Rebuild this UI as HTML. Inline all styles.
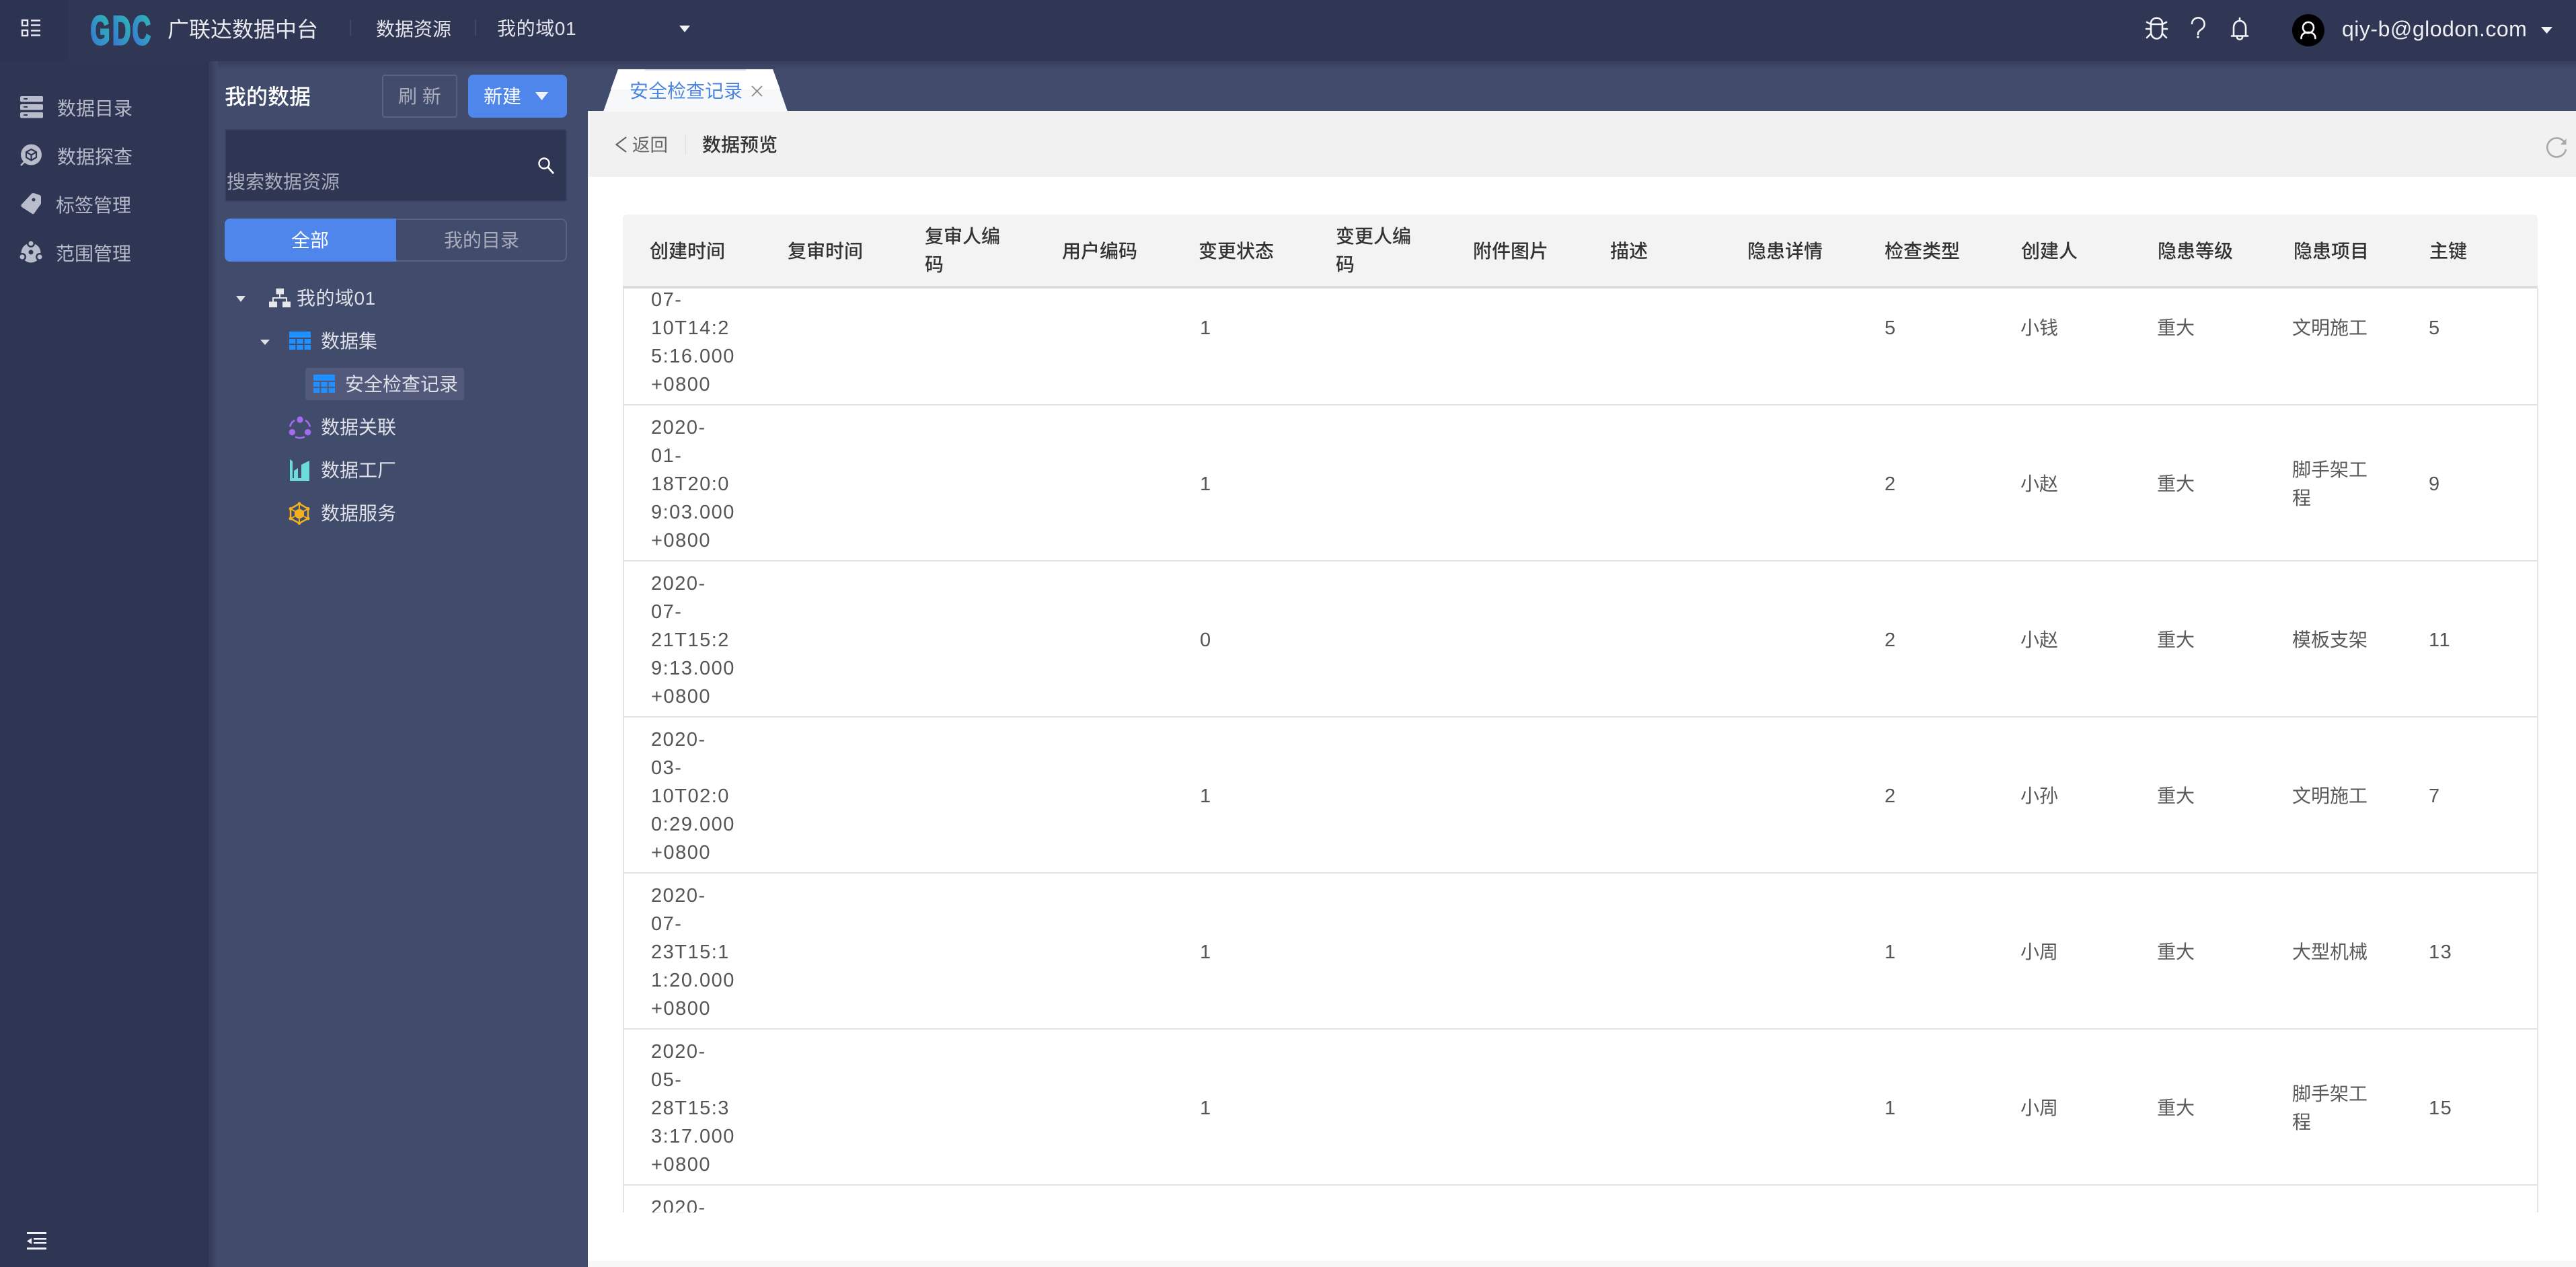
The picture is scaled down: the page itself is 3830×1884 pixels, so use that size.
<!DOCTYPE html>
<html lang="zh"><head><meta charset="utf-8"><title>广联达数据中台</title>
<style>
html,body{margin:0;padding:0;background:#fff}
body{width:3830px;height:1884px;position:relative;overflow:hidden;font-family:"Liberation Sans","Noto Sans CJK SC",sans-serif;font-size:28px;color:#555}
.a{position:absolute}
.t{position:absolute;white-space:nowrap;line-height:42px;margin-top:1px}
.h{font-weight:500;color:#333;font-size:28px}
.c{font-size:28px;color:#5a5a5a}
.n{font-size:29px;letter-spacing:1.5px;color:#555}
.l{color:#b5b9c8;font-size:28px}
.p{color:#dfe1e8;font-size:28px}
</style></head><body>
<div class="a" style="left:0;top:0;width:3830px;height:91px;background:#303755"></div>
<div class="a" style="left:0;top:0;width:102px;height:91px;background:#2d3451"></div>
<div class="a" style="left:0;top:91px;width:310px;height:1793px;background:#2f3654"></div>
<div class="a" style="left:310px;top:91px;width:3520px;height:74px;background:#414b6b"></div>
<div class="a" style="left:310px;top:91px;width:564px;height:1793px;background:#414b6b"></div>
<div class="a" style="left:310px;top:91px;width:3520px;height:14px;background:linear-gradient(#383f5e,#414b6b)"></div>
<div class="a" style="left:310px;top:91px;width:14px;height:1793px;background:linear-gradient(90deg,#333b5a,#414b6b)"></div>
<div class="a" style="left:874px;top:165px;width:2956px;height:98px;background:#f1f1f1"></div>
<div class="a" style="left:874px;top:263px;width:2956px;height:1621px;background:#fff"></div>
<div class="a" style="left:874px;top:1875px;width:2956px;height:9px;background:#f7f7f7"></div>

<div class="a" style="left:568px;top:111px;width:108px;height:60px;border:2px solid #5a627f;border-radius:4px"></div>
<div class="a" style="left:696px;top:111px;width:147px;height:64px;background:#4f86ec;border-radius:8px"></div>
<div class="a" style="left:334px;top:192px;width:505px;height:104px;background:#2f3654;border:2px solid #3a4263;border-radius:3px"></div>
<div class="a" style="left:589px;top:325px;width:252px;height:60px;border:2px solid #5a627f;border-left:none;border-radius:0 8px 8px 0"></div>
<div class="a" style="left:334px;top:325px;width:255px;height:64px;background:#4f86ec;border-radius:8px 0 0 8px"></div>
<div class="a" style="left:454px;top:547px;width:236px;height:48px;background:#52597a;border-radius:4px"></div>

<div class="t" style="left:249px;top:22px;font-size:32px;color:#e9eaee">广联达数据中台</div>
<div class="a" style="left:520px;top:29px;width:2px;height:24px;background:#434a68"></div>
<div class="t" style="left:559px;top:22px;color:#e3e4ea;font-size:28px">数据资源</div>
<div class="a" style="left:706px;top:29px;width:2px;height:24px;background:#434a68"></div>
<div class="t" style="left:739px;top:21px;color:#e3e4ea;font-size:28px;letter-spacing:.6px">我的域01</div>
<div class="t" style="left:3482px;top:21px;font-size:32px;letter-spacing:.5px;color:#eceef2">qiy-b@glodon.com</div>

<div class="t l" style="left:85px;top:140px">数据目录</div>
<div class="t l" style="left:85px;top:212px">数据探查</div>
<div class="t l" style="left:83px;top:284px">标签管理</div>
<div class="t l" style="left:83px;top:356px">范围管理</div>

<div class="t" style="left:334px;top:122px;font-size:32px;font-weight:500;color:#fff">我的数据</div>
<div class="t" style="left:592px;top:122px;font-size:28px;color:#a8acbb">刷 新</div>
<div class="t" style="left:719px;top:122px;font-size:28px;color:#fff">新建</div>
<div class="t" style="left:337px;top:249px;font-size:28px;color:#a9adbb">搜索数据资源</div>
<div class="t" style="left:433px;top:336px;font-size:28px;color:#fff">全部</div>
<div class="t" style="left:660px;top:336px;font-size:28px;color:#a8acbb">我的目录</div>

<div class="t p" style="left:441px;top:422px;letter-spacing:.5px">我的域01</div>
<div class="t p" style="left:477px;top:486px">数据集</div>
<div class="t p" style="left:513px;top:550px">安全检查记录</div>
<div class="t p" style="left:477px;top:614px">数据关联</div>
<div class="t p" style="left:477px;top:678px">数据工厂</div>
<div class="t p" style="left:477px;top:742px">数据服务</div>

<svg class="a" style="left:0;top:0" width="3830" height="1884" viewBox="0 0 3830 1884" fill="none">
<defs>
<linearGradient id="lg" x1="0" y1="1" x2="1" y2="0"><stop offset="0" stop-color="#3b6fd8"/><stop offset="1" stop-color="#2bbfb0"/></linearGradient>
</defs>
<path d="M919 103H1149L1171 166H897Z" fill="#f7f8f9"/>
<path d="M908 133L919 103H1149L1160 133Z" fill="#fff"/>
<rect x="959" y="103" width="150" height="2" fill="#dfe2e8"/>
<g stroke="#e8e9ef" stroke-width="2.4">
<rect x="33" y="30" width="8" height="8"/><rect x="33" y="45" width="8" height="8"/>
<path d="M46 30.5H60M46 37.5H60M46 45.5H60M46 52.5H60"/>
</g>
<g font-family="Liberation Sans" font-weight="700" font-size="60" fill="url(#lg)" stroke="url(#lg)" stroke-width="3">
<text x="134.500" y="66" textLength="29" lengthAdjust="spacingAndGlyphs">G</text>
<text x="167" y="66" textLength="27.500" lengthAdjust="spacingAndGlyphs">D</text>
<text x="196.500" y="66" textLength="27.500" lengthAdjust="spacingAndGlyphs">C</text>
</g>
<g fill="#f2f3f6">
<path d="M1010 38H1026L1018 48Z"/><path d="M3778 40H3795L3786.5 50Z"/><path d="M796 137H815L805.5 149Z"/>
<path d="M351 440H365L358 449Z" fill="#dfe1e8"/><path d="M387 505H401L394 513Z" fill="#dfe1e8"/>
</g>
<g stroke="#f4f5f8" stroke-width="2.600" stroke-linecap="round">
<path d="M3198 35C3198 24 3215 24 3215 35"/>
<path d="M3192 33L3198 36H3215L3221 33"/>
<path d="M3198 36V47C3198 61 3215 61 3215 47V36"/>
<path d="M3191 43H3198M3215 43H3222M3198 50L3192 56M3215 50L3221 56"/>
<path d="M3259 35A9.300 9.300 0 1 1 3274 43C3270 46 3268 47 3268 51"/>
<path d="M3321 53V41C3321 35 3325 31 3330 31C3335 31 3339 35 3339 41V53"/>
<path d="M3318 53.5H3342M3330 27V31M3326 55C3326 60 3334 60 3334 55"/>
</g>
<circle cx="3268" cy="55" r="1.800" fill="#f4f5f8"/>
<circle cx="3432" cy="45" r="24" fill="#000"/>
<circle cx="3432" cy="41" r="8" stroke="#fff" stroke-width="2.600"/>
<path d="M3421.5 57C3421.5 51 3426 48 3432 48C3438 48 3442.5 51 3442.5 57" stroke="#fff" stroke-width="2.600" stroke-linecap="round"/>
<g fill="#b9bdcb">
<rect x="30" y="143" width="34" height="8.500" rx="2"/><rect x="30" y="155" width="34" height="8.500" rx="2"/><rect x="30" y="167" width="34" height="8.500" rx="2"/>
<circle cx="46.5" cy="230" r="15.500"/>
<path d="M31 246L37 240" stroke="#b9bdcb" stroke-width="2.500"/>
<path d="M50 287L59 290Q61 291 61 293L61 303L51 317Q50 319 48 318L32.5 308Q30.5 306 32 304L47 288Q48 287 50 287Z"/>
<circle cx="46" cy="376" r="14.500"/>
</g>
<g fill="#2f3654">
<rect x="35" y="146" width="6" height="2"/><rect x="35" y="158" width="6" height="2"/><rect x="35" y="170" width="6" height="2"/>
<circle cx="50" cy="297" r="2.500"/>
<circle cx="46" cy="362" r="6"/><circle cx="33" cy="382" r="6"/><circle cx="59" cy="382" r="6"/><circle cx="46" cy="375" r="3.500"/>
</g>
<g fill="#b9bdcb"><circle cx="46" cy="362" r="3.500"/><circle cx="33" cy="382" r="3.500"/><circle cx="59" cy="382" r="3.500"/></g>
<path d="M46.5 222L54 226V234L46.5 238.5L39 234V226ZM39 226L46.5 230.5L54 226M46.5 230.5V238.5" stroke="#2f3654" stroke-width="2.200" stroke-linejoin="round"/>
<g fill="#f2f3f6">
<rect x="40" y="1832" width="29" height="3"/><rect x="50" y="1841" width="19" height="2.500"/><rect x="50" y="1847" width="19" height="2.500"/><rect x="40" y="1855" width="29" height="3"/>
<path d="M47 1841V1850L40 1845.5Z"/>
</g>
<circle cx="809" cy="243" r="7.500" stroke="#fff" stroke-width="2.400"/>
<path d="M815 249L823 258" stroke="#fff" stroke-width="2.800"/>
<g fill="#e6e7ec"><rect x="410.5" y="429" width="11.500" height="8.500"/><rect x="400" y="448.5" width="12" height="8.500"/><rect x="420" y="448.5" width="12" height="8.500"/></g>
<path d="M416 437V443M406 449V443H426V449" stroke="#e6e7ec" stroke-width="2"/>
<g fill="#1e90ff">
<rect x="430" y="493" width="32" height="9"/><rect x="430" y="504" width="9.300" height="7"/><rect x="441.3" y="504" width="9.300" height="7"/><rect x="452.7" y="504" width="9.300" height="7"/><rect x="430" y="513" width="9.300" height="7"/><rect x="441.3" y="513" width="9.300" height="7"/><rect x="452.7" y="513" width="9.300" height="7"/>
<rect x="466" y="557" width="32" height="9"/><rect x="466" y="568" width="9.300" height="7"/><rect x="477.3" y="568" width="9.300" height="7"/><rect x="488.7" y="568" width="9.300" height="7"/><rect x="466" y="577" width="9.300" height="7"/><rect x="477.3" y="577" width="9.300" height="7"/><rect x="488.7" y="577" width="9.300" height="7"/>
</g>
<g fill="#a26bf0"><circle cx="446" cy="624" r="4.700"/><circle cx="434.3" cy="642.7" r="4.700"/><circle cx="457.7" cy="642.7" r="4.700"/></g>
<path d="M438 625A15.500 15.500 0 0 0 431 634.5M454 625A15.500 15.500 0 0 1 461 634.5M439 649.5A15.500 15.500 0 0 0 453 649.5" stroke="#a26bf0" stroke-width="2.600"/>
<path d="M431 683L435 686V711H437V700L443 696V711H448V691L460 685V715H431Z" fill="#6cdcd8"/>
<path d="M445 749L458 756.5V771L445 778L432 771V756.5Z" stroke="#f2b01e" stroke-width="2.500"/>
<path d="M445 756L452 760V768L445 772L438 768V760Z" fill="#f2b01e"/>
<path d="M445 749V756M458 756.5L452 760M458 771L452 768M445 778V772M432 771L438 768M432 756.5L438 760" stroke="#f2b01e" stroke-width="2"/>
<g fill="#f2b01e"><circle cx="445" cy="749" r="2.500"/><circle cx="458" cy="756.5" r="2.500"/><circle cx="458" cy="771" r="2.500"/><circle cx="445" cy="778" r="2.500"/><circle cx="432" cy="771" r="2.500"/><circle cx="432" cy="756.5" r="2.500"/></g>
<path d="M1118 128L1133 143M1133 128L1118 143" stroke="#8a8a8a" stroke-width="1.800"/>
<path d="M931 204L916.500 215L931 226" stroke="#666" stroke-width="2.200"/>
<rect x="1018.5" y="200" width="1.500" height="30" fill="#e2e2e2"/>
<path d="M3812.5 211A14 14 0 1 0 3815 222" stroke="#a8a8a8" stroke-width="2.600"/>
<path d="M3815.5 206V215H3807Z" fill="#a8a8a8"/>
</svg>

<div class="t" style="left:936px;top:114px;font-size:28px;color:#4d86e0">安全检查记录</div>
<div class="t" style="left:940px;top:194px;font-size:26.5px;color:#666">返回</div>
<div class="t" style="left:1044px;top:194px;font-size:28px;font-weight:500;color:#333">数据预览</div>

<div class="a" style="left:926px;top:319px;width:2847px;height:106px;background:#f3f3f3;border-radius:6px 6px 0 0;border-bottom:4px solid #dcdcdc"></div>
<div class="t h" style="left:966px;top:352px">创建时间</div>
<div class="t h" style="left:1171px;top:352px">复审时间</div>
<div class="t h" style="left:1375px;top:330px">复审人编<br>码</div>
<div class="t h" style="left:1579px;top:352px">用户编码</div>
<div class="t h" style="left:1782px;top:352px">变更状态</div>
<div class="t h" style="left:1986px;top:330px">变更人编<br>码</div>
<div class="t h" style="left:2190px;top:352px">附件图片</div>
<div class="t h" style="left:2394px;top:352px">描述</div>
<div class="t h" style="left:2598px;top:352px">隐患详情</div>
<div class="t h" style="left:2802px;top:352px">检查类型</div>
<div class="t h" style="left:3005px;top:352px">创建人</div>
<div class="t h" style="left:3208px;top:352px">隐患等级</div>
<div class="t h" style="left:3410px;top:352px">隐患项目</div>
<div class="t h" style="left:3612px;top:352px">主键</div>

<div class="a" style="left:926px;top:429px;width:2848px;height:1374px;overflow:hidden;box-sizing:border-box;border-left:2px solid #e3e3e3;border-right:2px solid #e3e3e3">
<div style="position:absolute;left:-928px;top:-429px;width:3830px;height:1884px">
<div class="a" style="left:928px;top:601px;width:2844px;height:2px;background:#e4e4e4"></div>
<div class="a" style="left:928px;top:833px;width:2844px;height:2px;background:#e4e4e4"></div>
<div class="a" style="left:928px;top:1065px;width:2844px;height:2px;background:#e4e4e4"></div>
<div class="a" style="left:928px;top:1297px;width:2844px;height:2px;background:#e4e4e4"></div>
<div class="a" style="left:928px;top:1529px;width:2844px;height:2px;background:#e4e4e4"></div>
<div class="a" style="left:928px;top:1761px;width:2844px;height:2px;background:#e4e4e4"></div>

<div class="t n" style="left:968px;top:424px">07-<br>10T14:2<br>5:16.000<br>+0800</div>
<div class="t n" style="left:1784px;top:466px">1</div><div class="t n" style="left:2802px;top:466px">5</div>
<div class="t c" style="left:3004px;top:466px">小钱</div><div class="t c" style="left:3207px;top:466px">重大</div><div class="t c" style="left:3408px;top:466px">文明施工</div>
<div class="t n" style="left:3611px;top:466px">5</div>

<div class="t n" style="left:968px;top:614px">2020-<br>01-<br>18T20:0<br>9:03.000<br>+0800</div>
<div class="t n" style="left:1784px;top:698px">1</div><div class="t n" style="left:2802px;top:698px">2</div>
<div class="t c" style="left:3004px;top:698px">小赵</div><div class="t c" style="left:3207px;top:698px">重大</div><div class="t c" style="left:3408px;top:677px">脚手架工<br>程</div>
<div class="t n" style="left:3611px;top:698px">9</div>

<div class="t n" style="left:968px;top:846px">2020-<br>07-<br>21T15:2<br>9:13.000<br>+0800</div>
<div class="t n" style="left:1784px;top:930px">0</div><div class="t n" style="left:2802px;top:930px">2</div>
<div class="t c" style="left:3004px;top:930px">小赵</div><div class="t c" style="left:3207px;top:930px">重大</div><div class="t c" style="left:3408px;top:930px">模板支架</div>
<div class="t n" style="left:3611px;top:930px">11</div>

<div class="t n" style="left:968px;top:1078px">2020-<br>03-<br>10T02:0<br>0:29.000<br>+0800</div>
<div class="t n" style="left:1784px;top:1162px">1</div><div class="t n" style="left:2802px;top:1162px">2</div>
<div class="t c" style="left:3004px;top:1162px">小孙</div><div class="t c" style="left:3207px;top:1162px">重大</div><div class="t c" style="left:3408px;top:1162px">文明施工</div>
<div class="t n" style="left:3611px;top:1162px">7</div>

<div class="t n" style="left:968px;top:1310px">2020-<br>07-<br>23T15:1<br>1:20.000<br>+0800</div>
<div class="t n" style="left:1784px;top:1394px">1</div><div class="t n" style="left:2802px;top:1394px">1</div>
<div class="t c" style="left:3004px;top:1394px">小周</div><div class="t c" style="left:3207px;top:1394px">重大</div><div class="t c" style="left:3408px;top:1394px">大型机械</div>
<div class="t n" style="left:3611px;top:1394px">13</div>

<div class="t n" style="left:968px;top:1542px">2020-<br>05-<br>28T15:3<br>3:17.000<br>+0800</div>
<div class="t n" style="left:1784px;top:1626px">1</div><div class="t n" style="left:2802px;top:1626px">1</div>
<div class="t c" style="left:3004px;top:1626px">小周</div><div class="t c" style="left:3207px;top:1626px">重大</div><div class="t c" style="left:3408px;top:1605px">脚手架工<br>程</div>
<div class="t n" style="left:3611px;top:1626px">15</div>

<div class="t n" style="left:968px;top:1774px">2020-</div>
</div></div>
</body></html>
